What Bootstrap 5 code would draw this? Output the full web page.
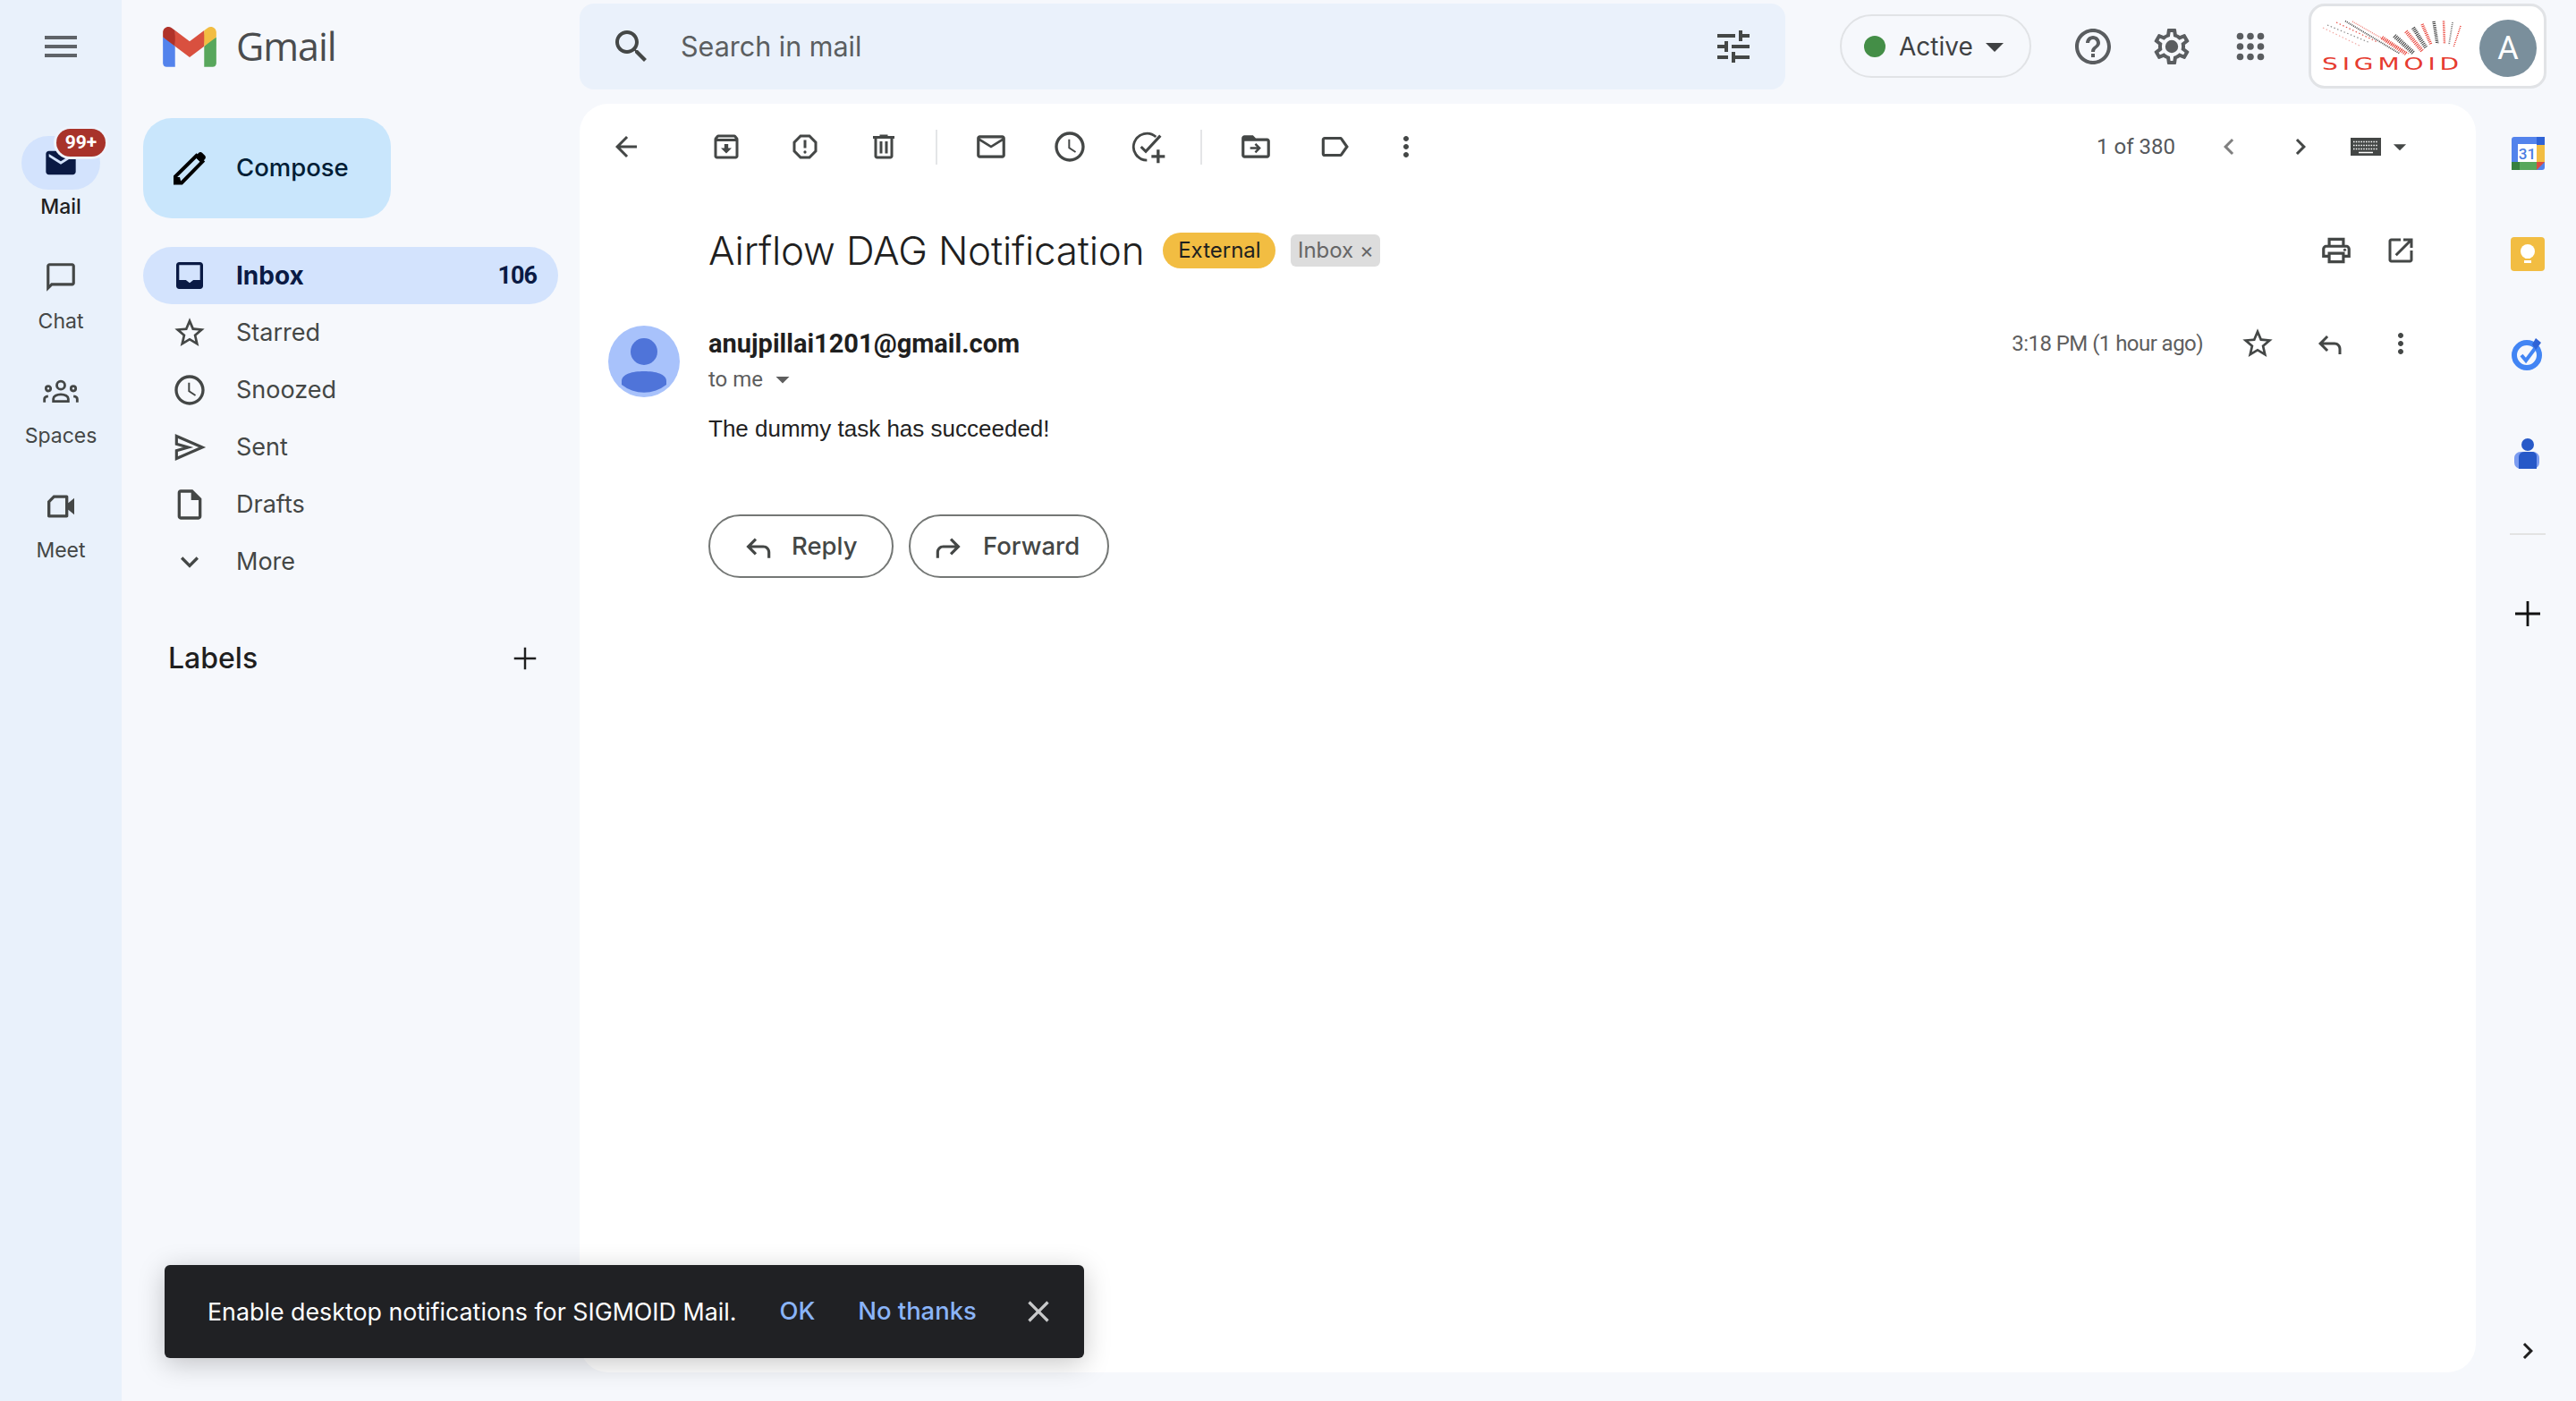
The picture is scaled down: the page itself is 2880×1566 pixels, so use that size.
<!DOCTYPE html>
<html lang="en">
<head>
    <meta charset="UTF-8">
    <title>Airflow DAG Notification - Gmail</title>
    <link href="https://cdn.jsdelivr.net/npm/bootstrap@5.3.3/dist/css/bootstrap.min.css" rel="stylesheet">
    <style>
        body {
            background-color: #f6f8fc;
            font-family: Inter, "Noto Sans", sans-serif;
            color: #444746;
            height: 1566px;
            overflow: hidden;
        }
        .ico { fill: currentColor; flex-shrink: 0; display: block; }
        .s32 { width: 32px; height: 32px; }
        .s34 { width: 34px; height: 34px; }
        .s36 { width: 36px; height: 36px; }
        .s38 { width: 38px; height: 38px; }
        .s40 { width: 40px; height: 40px; }
        .s42 { width: 42px; height: 42px; }
        .s48 { width: 48px; height: 48px; }

        /* left rail */
        .app-rail { width: 136px; background-color: #e9f1fb; flex-shrink: 0; }
        .rail-top { height: 152px; padding-top: 28px; color: #5f6368; }
        .rail-item { height: 128px; width: 136px; }
        .rail-pill { width: 88px; height: 60px; border-radius: 30px; }
        .rail-item.is-on .rail-pill { background-color: #d3e3fd; color: #0a1a44; }
        .rail-label { font-size: 23px; line-height: 38px; }
        .rail-item.is-on .rail-label { color: #1f1f1f; font-weight: 500; }
        .mail-count {
            top: -8px; left: 39px; height: 31px; width: 55px;
            background-color: #a8332a; color: #fff;
            font: 700 21px/31px Roboto, sans-serif;
            border-radius: 16px; text-align: center;
            box-shadow: 0 0 0 3px #eef3fc;
        }

        /* header */
        .top-row { height: 116px; }
        .brand { width: 512px; padding-left: 46px; gap: 22px; height: 104px; }
        .brand-name { font-size: 43px; letter-spacing: -1px; color: #4a4c4e; font-family: "Open Sans", sans-serif; }
        .search-box {
            width: 1348px; height: 96px; margin-top: 4px;
            background-color: #eaf1fb; border-radius: 16px;
            padding: 0 34px 0 34px;
        }
        .search-text { font-size: 30.5px; color: #5b5e60; margin-left: 31px; }
        .status-pill {
            width: 214px; height: 71px; margin: 16px 25px 0 61px;
            border: 2px solid #e1e3e6; border-radius: 36px;
            padding-left: 25px; font-size: 28px; color: #3f4143;
        }
        .status-dot { width: 24px; height: 24px; background-color: #448e47; border-radius: 50%; margin-right: 15px; }
        .top-btn { width: 88px; height: 104px; color: #5a5d60; }
        .org-box {
            width: 266px; height: 95px; margin: 4px 0 0 21px;
            background-color: #fff; border: 3px solid #e1e3e6; border-radius: 18px;
        }
        .org-logo { left: 12px; top: 15px; width: 160px; height: 42px; }
        .org-name {
            left: 12px; top: 50px; width: 158px; text-align: center;
            font: 400 20px/28px "DejaVu Sans", sans-serif; letter-spacing: 3.5px; color: #e63b30;
            transform: scaleX(1.4);
        }
        .org-avatar {
            right: 8px; top: 15px; width: 64px; height: 64px;
            background-color: #7a8f9c; color: #fff; border-radius: 50%;
            font: 400 36px/64px Roboto, sans-serif; text-align: center;
        }

        /* sidebar */
        .body-row { height: 1450px; padding-bottom: 32px; }
        .side-col { width: 512px; flex-shrink: 0; padding: 16px 0 0 24px; }
        .compose-btn {
            width: 277px; height: 112px; border-radius: 32px; background-color: #c9e6fc;
            padding-left: 28px; gap: 28px; font-size: 27.5px; font-weight: 500; color: #001d35;
        }
        .compose-btn .ico { color: #000; }
        .folder-list { margin-top: 32px; width: 464px; }
        .folder-row {
            height: 64px; border-radius: 32px; padding: 0 24px 0 32px; gap: 32px;
            font-size: 27px; color: #444746;
        }
        .folder-row.is-on { background-color: #d3e3fd; color: #0a1a44; font-weight: 700; font-size: 28px; }
        .folder-num { font: 700 27px Roboto, sans-serif; letter-spacing: -1px; }
        .labels-row { width: 464px; height: 64px; margin-top: 44px; padding: 0 16px 0 28px; font-size: 32px; font-weight: 500; color: #1f1f1f; }

        /* message card */
        .mail-card { width: 2120px; flex-shrink: 0; background-color: #fff; border-radius: 32px; }
        .tool-row { height: 96px; padding: 0 68px 0 8px; }
        .tool-btn { width: 88px; height: 96px; }
        .tool-last { margin-left: -8px; }
        .tool-sep { width: 2px; height: 39px; min-height: 0; align-self: center; background-color: #e4e5e7; opacity: 1; margin: 0 16px 0 14px; }
        .page-count { font: 400 24px Roboto, sans-serif; color: #55585b; margin-right: 20px; }
        .page-btn { width: 80px; height: 96px; }
        .keys-ico { margin: 0 4px 0 16px; }
        .subject-row { height: 72px; margin-top: 32px; padding: 0 48px 0 144px; }
        .subject-text { font-size: 44px; font-weight: 300; letter-spacing: -.2px; color: #1f1f1f; }
        .tag-ext {
            height: 40px; width: 126px; margin-left: 21px; border-radius: 20px;
            background-color: #f2bd42; color: #1f1f1f; font-size: 24px; text-align: center; line-height: 40px;
        }
        .tag-box {
            height: 36px; width: 100px; margin-left: 17px; border-radius: 6px;
            background-color: #dddddd; color: #666; font-size: 24px; text-align: center; line-height: 36px;
        }
        .head-btn { width: 72px; height: 72px; }
        .msg-row { margin-top: 48px; padding: 0 44px 0 32px; gap: 32px; }
        .who-avatar { width: 80px; height: 80px; flex-shrink: 0; }
        .who-name { font: 700 29px/40px Roboto, sans-serif; color: #1f1f1f; }
        .who-to { font: 400 24px/40px Roboto, sans-serif; color: #5e5e5e; }
        .msg-time { font: 400 24px/40px Roboto, sans-serif; color: #5e5e5e; letter-spacing: -.55px; margin-right: 21px; }
        .msg-btn { width: 80px; height: 40px; }
        .msg-text { font: 400 26px/40px "Liberation Sans", sans-serif; color: #222; margin-top: 15px; }
        .reply-row { margin-top: 76px; gap: 17px; }
        .reply-btn {
            height: 71px; border: 2px solid #747775; border-radius: 36px; padding: 0;
            font-size: 27.5px; font-weight: 500; color: #444746; gap: 19px;
        }
        .reply-a { width: 207px; padding-left: 34px; }
        .reply-b { width: 224px; padding-left: 24px; }

        /* right rail */
        .add-col { width: 112px; padding-left: 4px; }
        .add-cal { width: 37px; height: 37px; margin-top: 37px; }
        .add-keep { width: 38px; height: 38px; margin-top: 75px; }
        .add-task { width: 36px; height: 44px; margin-top: 71px; }
        .add-person { width: 30px; height: 34px; margin-top: 72px; }
        .add-line { width: 40px; height: 2px; background-color: #e3e3e3; margin-top: 72px; }
        .add-plus { margin-top: 64px; color: #111; }
        .add-more { margin-top: auto; margin-bottom: 6px; color: #1f1f1f; }

        /* notification bar */
        .notify-bar {
            left: 184px; top: 1414px; width: 1028px; height: 104px;
            background-color: #202124; color: #fff; border-radius: 6px;
            padding-left: 48px; font-size: 26.8px;
            box-shadow: 0 6px 30px rgba(0,0,0,.22);
        }
        .notify-act { color: #8ab4f8; font-weight: 500; font-size: 27.4px; }
        .notify-x { color: #c8c9ca; margin-left: 49px; }
    </style>
</head>
<body class="d-flex position-relative">

    <svg class="d-none">
        <symbol id="i-menu" viewBox="0 0 24 24"><path d="M3 18h18v-2H3v2zm0-5h18v-2H3v2zm0-7v2h18V6H3z"/></symbol>
        <symbol id="i-mailfill" viewBox="0 0 24 24"><path d="M20 4H4c-1.1 0-2 .9-2 2v12c0 1.1.9 2 2 2h16c1.1 0 2-.9 2-2V6c0-1.1-.9-2-2-2zm0 4l-8 5-8-5V6l8 5 8-5v2z"/></symbol>
        <symbol id="i-chat" viewBox="0 0 24 24"><path d="M20 2H4c-1.1 0-2 .9-2 2v18l4-4h14c1.1 0 2-.9 2-2V4c0-1.1-.9-2-2-2zm0 14H5.17L4 17.17V4h16v12z"/></symbol>
        <symbol id="i-spaces" viewBox="0 0 24 24"><g fill="none" stroke="currentColor" stroke-width="1.7"><circle cx="12" cy="7.6" r="2.7"/><circle cx="3.6" cy="9.8" r="1.6"/><circle cx="20.4" cy="9.8" r="1.6"/><path d="M7 18.4v-1.8c0-1.7 2.2-2.9 5-2.9s5 1.200 5 2.900v1.800z"/><path d="M1 19v-2.200c0-1 .9-1.700 2.500-1.900M23 19v-2.200c0-1-.9-1.700-2.500-1.900"/></g></symbol>
        <symbol id="i-meet" viewBox="0 0 24 24"><path d="M15 6.500v11H5V9.300L7.800 6.500H15m1-2H7L3 8.500v10c0 .55.45 1 1 1h12c.55 0 1-.45 1-1v-4.300l4 3.300V6.500l-4 3.300V5.500c0-.55-.45-1-1-1z"/></symbol>
        <symbol id="i-pencil" viewBox="0 0 24 24"><path d="M4 20.200v-3.500L15.800 5l3.400 3.300L7.500 20.200z" fill="none" stroke="currentColor" stroke-width="2"/><path d="M15 5.500l2-2c.6-.6 1.500-.6 2.100 0l1.400 1.400c.6.6.6 1.500 0 2.100l-2 2z"/><path d="M3 17h3.500l1 4H3z"/></symbol>
        <symbol id="i-inbox" viewBox="0 0 24 24"><path d="M19 3H4.990c-1.110 0-1.980.89-1.980 2L3 19c0 1.100.88 2 1.990 2H19c1.100 0 2-.9 2-2V5c0-1.110-.9-2-2-2zm0 12h-4.500L12 17l-2.500-2H4.990V5H19v10z"/></symbol>
        <symbol id="i-star" viewBox="0 0 24 24"><path d="M22 9.240l-7.190-.62L12 2 9.190 8.630 2 9.240l5.460 4.730L5.820 21 12 17.270 18.180 21l-1.630-7.030L22 9.240zM12 15.400l-3.760 2.270 1-4.280-3.320-2.880 4.380-.38L12 6.100l1.710 4.040 4.380.38-3.320 2.880 1 4.280L12 15.400z"/></symbol>
        <symbol id="i-clock" viewBox="0 0 24 24"><path d="M11.990 2C6.470 2 2 6.480 2 12s4.470 10 9.990 10C17.520 22 22 17.520 22 12S17.520 2 11.990 2zM12 20c-4.420 0-8-3.580-8-8s3.580-8 8-8 8 3.580 8 8-3.580 8-8 8zm.2-13H11v6l4.600 3.100.65-1-4.050-2.700z"/></symbol>
        <symbol id="i-send" viewBox="0 0 24 24"><path d="M3.200 4.500L20.500 12 3.200 19.500v-5.300L11 12 3.200 9.800z" fill="none" stroke="currentColor" stroke-width="1.900"/></symbol>
        <symbol id="i-draft" viewBox="0 0 24 24"><path d="M14 2H6c-1.100 0-1.990.9-1.990 2L4 20c0 1.100.89 2 1.990 2H18c1.100 0 2-.9 2-2V8l-6-6zM6 20V4h7v5h5v11H6z"/></symbol>
        <symbol id="i-down" viewBox="0 0 24 24"><path d="M16.590 8.590L12 13.170 7.410 8.590 6 10l6 6 6-6z"/></symbol>
        <symbol id="i-plus" viewBox="0 0 24 24"><path d="M19 12.700h-6.300V19h-1.400v-6.300H5v-1.400h6.300V5h1.400v6.300H19z"/></symbol>
        <symbol id="i-search" viewBox="0 0 24 24"><path d="M15.500 14h-.79l-.28-.27C15.410 12.590 16 11.110 16 9.500 16 5.910 13.090 3 9.500 3S3 5.910 3 9.500 5.910 16 9.500 16c1.610 0 3.090-.59 4.230-1.570l.27.28v.79l5 4.990L20.490 19l-4.990-5zm-6 0C7.010 14 5 11.990 5 9.500S7.010 5 9.500 5 14 7.010 14 9.500 11.990 14 9.500 14z"/></symbol>
        <symbol id="i-tune" viewBox="0 0 24 24"><path d="M3 17v2h6v-2H3zM3 5v2h10V5H3zm10 16v-2h8v-2h-8v-2h-2v6h2zM7 9v2H3v2h4v2h2V9H7zm14 4v-2H11v2h10zm-6-4h2V7h4V5h-4V3h-2v6z"/></symbol>
        <symbol id="i-caret" viewBox="0 0 24 24"><path d="M7 10l5 5 5-5z"/></symbol>
        <symbol id="i-help" viewBox="0 0 24 24"><path d="M11 18h2v-2h-2v2zm1-16C6.480 2 2 6.480 2 12s4.480 10 10 10 10-4.480 10-10S17.520 2 12 2zm0 18c-4.410 0-8-3.590-8-8s3.590-8 8-8 8 3.590 8 8-3.590 8-8 8zm0-14c-2.210 0-4 1.790-4 4h2c0-1.100.9-2 2-2s2 .9 2 2c0 2-3 1.750-3 5h2c0-2.250 3-2.500 3-5 0-2.210-1.790-4-4-4z"/></symbol>
        <symbol id="i-gear" viewBox="0 0 24 24"><path d="M19.430 12.980c.04-.32.07-.64.07-.98 0-.34-.03-.66-.07-.98l2.110-1.650c.19-.15.24-.42.12-.64l-2-3.460c-.09-.16-.26-.25-.44-.25-.06 0-.12.01-.17.03l-2.490 1c-.52-.4-1.080-.73-1.690-.98l-.38-2.650C14.460 2.180 14.250 2 14 2h-4c-.25 0-.46.18-.49.42l-.38 2.650c-.61.25-1.170.59-1.690.98l-2.490-1c-.06-.02-.12-.03-.18-.03-.17 0-.34.09-.43.25l-2 3.460c-.13.22-.07.49.12.64l2.110 1.650c-.04.32-.07.65-.07.98 0 .33.03.66.07.98l-2.110 1.650c-.19.15-.24.42-.12.64l2 3.460c.09.16.26.25.44.25.06 0 .12-.01.17-.03l2.490-1c.52.4 1.080.73 1.690.98l.38 2.650c.03.24.24.42.49.42h4c.25 0 .46-.18.49-.42l.38-2.650c.61-.25 1.170-.59 1.690-.98l2.490 1c.06.02.12.03.18.03.17 0 .34-.09.43-.25l2-3.460c.12-.22.07-.49-.12-.64l-2.110-1.650zm-1.980-1.710c.04.31.05.52.05.73 0 .21-.02.43-.05.73l-.14 1.130.89.7 1.080.84-.7 1.210-1.270-.51-1.040-.42-.9.68c-.43.32-.84.56-1.250.73l-1.060.43-.16 1.130-.2 1.350h-1.400l-.19-1.350-.16-1.130-1.060-.43c-.43-.18-.83-.41-1.230-.71l-.91-.7-1.060.43-1.270.51-.7-1.210 1.080-.84.89-.7-.14-1.130c-.03-.31-.05-.54-.05-.74s.02-.43.05-.73l.14-1.130-.89-.7-1.080-.84.7-1.210 1.270.51 1.040.42.9-.68c.43-.32.84-.56 1.250-.73l1.060-.43.16-1.130.2-1.350h1.390l.19 1.350.16 1.130 1.060.43c.43.18.83.41 1.230.71l.91.7 1.060-.43 1.270-.51.7 1.210-1.070.85-.89.7.14 1.130z"/><circle cx="12" cy="12" r="3.600"/></symbol>
        <symbol id="i-apps" viewBox="0 0 32 32"><g><circle cx="4.500" cy="4.500" r="3.800"/><circle cx="16" cy="4.500" r="3.800"/><circle cx="27.500" cy="4.500" r="3.800"/><circle cx="4.500" cy="16" r="3.800"/><circle cx="16" cy="16" r="3.800"/><circle cx="27.500" cy="16" r="3.800"/><circle cx="4.500" cy="27.500" r="3.800"/><circle cx="16" cy="27.500" r="3.800"/><circle cx="27.500" cy="27.500" r="3.800"/></g></symbol>
        <symbol id="i-back" viewBox="0 0 24 24"><path d="M20 11H7.830l5.590-5.590L12 4l-8 8 8 8 1.410-1.410L7.830 13H20v-2z"/></symbol>
        <symbol id="i-archive" viewBox="0 0 24 24"><path d="M20.540 5.230l-1.390-1.680C18.880 3.210 18.470 3 18 3H6c-.47 0-.88.21-1.160.55L3.460 5.230C3.170 5.570 3 6.020 3 6.500V19c0 1.100.9 2 2 2h14c1.100 0 2-.9 2-2V6.500c0-.48-.17-.93-.46-1.270zM6.240 5h11.520l.81.97H5.440l.8-.97zM5 19V8h14v11H5zm8.450-9h-2.900v3H8l4 4 4-4h-2.550z"/></symbol>
        <symbol id="i-report" viewBox="0 0 24 24"><path d="M15.730 3H8.270L3 8.270v7.460L8.270 21h7.460L21 15.730V8.270L15.730 3zM19 14.900L14.900 19H9.100L5 14.900V9.100L9.100 5h5.800L19 9.100v5.800z"/><path d="M11 7h2v6h-2z"/><circle cx="12" cy="16" r="1.100"/></symbol>
        <symbol id="i-trash" viewBox="0 0 24 24"><path d="M15 4V3H9v1H4v2h1v13c0 1.100.9 2 2 2h10c1.100 0 2-.9 2-2V6h1V4h-5zm2 15H7V6h10v13zM9 8h2v9H9zm4 0h2v9h-2z"/></symbol>
        <symbol id="i-mail" viewBox="0 0 24 24"><path d="M22 6c0-1.100-.9-2-2-2H4c-1.100 0-2 .9-2 2v12c0 1.100.9 2 2 2h16c1.100 0 2-.9 2-2V6zm-2 0l-8 5-8-5h16zm0 12H4V8l8 5 8-5v10z"/></symbol>
        <symbol id="i-task" viewBox="0 0 24 24"><path d="M17 5.400A9 9 0 1 0 11 21.100" fill="none" stroke="currentColor" stroke-width="1.700"/><path d="M7 12l3.200 3.200L20 4.600" fill="none" stroke="currentColor" stroke-width="1.900"/><path d="M17.500 14v3.500H14v2h3.500V23h2v-3.500H23v-2h-3.500V14z"/></symbol>
        <symbol id="i-move" viewBox="0 0 24 24"><path d="M20 6h-8l-2-2H4c-1.100 0-2 .9-2 2v12c0 1.100.9 2 2 2h16c1.100 0 2-.9 2-2V8c0-1.100-.9-2-2-2zm0 12H4V8h16v10z"/><path d="M12.200 9.500l-1.100 1.100 1.600 1.600H8v1.600h4.700l-1.600 1.600 1.100 1.100 3.500-3.500z"/></symbol>
        <symbol id="i-label" viewBox="0 0 24 24"><path d="M17.630 5.840C17.270 5.330 16.670 5 16 5L5 5.010C3.900 5.010 3 5.900 3 7v10c0 1.100.9 1.990 2 1.990L16 19c.67 0 1.270-.33 1.630-.84L22 12l-4.370-6.160zM16 17H5V7h11l3.550 5L16 17z"/></symbol>
        <symbol id="i-more" viewBox="0 0 24 24"><path d="M12 8c1.100 0 2-.9 2-2s-.9-2-2-2-2 .9-2 2 .9 2 2 2zm0 2c-1.100 0-2 .9-2 2s.9 2 2 2 2-.9 2-2-.9-2-2-2zm0 6c-1.100 0-2 .9-2 2s.9 2 2 2 2-.9 2-2-.9-2-2-2z"/></symbol>
        <symbol id="i-prev" viewBox="0 0 24 24"><path d="M15.410 7.410L14 6l-6 6 6 6 1.410-1.410L10.830 12z"/></symbol>
        <symbol id="i-next" viewBox="0 0 24 24"><path d="M10 6L8.590 7.410 13.170 12l-4.580 4.590L10 18l6-6z"/></symbol>
        <symbol id="i-keys" viewBox="0 0 34 20"><rect width="34" height="20" fill="currentColor"/><path d="M3 4.500h28M3 8.500h28M3 12.500h28" stroke="#fff" stroke-width="1.500" stroke-dasharray="1.500 1.300" fill="none"/><path d="M9 16.500h16" stroke="#fff" stroke-width="1.500" fill="none"/></symbol>
        <symbol id="i-print" viewBox="0 0 24 24"><path d="M19 8h-1V3H6v5H5c-1.660 0-3 1.340-3 3v6h4v4h12v-4h4v-6c0-1.660-1.340-3-3-3zM8 5h8v3H8V5zm8 12v2H8v-4h8v2zm2-2v-2H6v2H4v-4c0-.55.45-1 1-1h14c.55 0 1 .45 1 1v4h-2z"/><circle cx="18" cy="11.500" r="1"/></symbol>
        <symbol id="i-open" viewBox="0 0 24 24"><path d="M19 19H5V5h7V3H5c-1.110 0-2 .9-2 2v14c0 1.100.89 2 2 2h14c1.100 0 2-.9 2-2v-7h-2v7zM14 3v2h3.590l-9.830 9.830 1.410 1.410L19 6.410V10h2V3h-7z"/></symbol>
        <symbol id="i-reply" viewBox="0 0 24 24"><path d="M21 20h-2v-4c0-1.660-1.340-3-3-3H7.830l3.590 3.590L10 18l-6-6 6-6 1.410 1.410L7.830 11H16c2.760 0 5 2.240 5 5v4z"/></symbol>
        <symbol id="i-forward" viewBox="0 0 24 24"><path d="M3 20h2v-4c0-1.660 1.340-3 3-3h8.170l-3.590 3.590L14 18l6-6-6-6-1.410 1.410L16.170 11H8c-2.760 0-5 2.240-5 5v4z"/></symbol>
        <symbol id="i-close" viewBox="0 0 24 24"><path d="M19 6.410L17.590 5 12 10.590 6.410 5 5 6.410 10.590 12 5 17.590 6.410 19 12 13.410 17.590 19 19 17.590 13.410 12z"/></symbol>
    </svg>

    <!-- left app rail -->
    <div class="app-rail d-flex flex-column align-items-center">
        <div class="rail-top"><svg class="ico s48"><use href="#i-menu"/></svg></div>
        <div class="rail-item is-on d-flex flex-column align-items-center">
            <div class="rail-pill position-relative d-flex align-items-center justify-content-center">
                <svg class="ico s40"><use href="#i-mailfill"/></svg>
                <span class="mail-count position-absolute">99+</span>
            </div>
            <div class="rail-label">Mail</div>
        </div>
        <div class="rail-item d-flex flex-column align-items-center">
            <div class="rail-pill d-flex align-items-center justify-content-center"><svg class="ico s38"><use href="#i-chat"/></svg></div>
            <div class="rail-label">Chat</div>
        </div>
        <div class="rail-item d-flex flex-column align-items-center">
            <div class="rail-pill d-flex align-items-center justify-content-center"><svg class="ico s40"><use href="#i-spaces"/></svg></div>
            <div class="rail-label">Spaces</div>
        </div>
        <div class="rail-item d-flex flex-column align-items-center">
            <div class="rail-pill d-flex align-items-center justify-content-center"><svg class="ico s40"><use href="#i-meet"/></svg></div>
            <div class="rail-label">Meet</div>
        </div>
    </div>

    <div class="flex-grow-1 d-flex flex-column">
        <!-- header -->
        <div class="top-row d-flex">
            <div class="brand d-flex align-items-center">
                <svg width="60" height="45" viewBox="0 0 256 193">
                    <path fill="#5383ec" d="M58.182 192.050V93.140L27.507 65.077 0 49.504v125.091c0 9.658 7.825 17.455 17.455 17.455h40.727Z"/>
                    <path fill="#58a75c" d="M197.818 192.050h40.727c9.659 0 17.455-7.826 17.455-17.455V49.505l-31.156 17.837-27.026 25.798v98.910Z"/>
                    <path fill="#d9503f" d="M58.182 93.140l-4.174-38.647 4.174-36.989L128 69.868l69.818-52.364 4.669 34.992-4.669 40.644L128 145.504z"/>
                    <path fill="#f2bd42" d="M197.818 17.504V93.140L256 49.504V26.231c0-21.585-24.640-33.890-41.890-20.945l-16.292 12.218Z"/>
                    <path fill="#b03229" d="M0 49.504l26.759 20.070L58.182 93.140V17.504L41.890 5.286C24.610-7.660 0 4.646 0 26.230v23.273Z"/>
                </svg>
                <span class="brand-name">Gmail</span>
            </div>
            <div class="search-box d-flex align-items-center">
                <svg class="ico s48"><use href="#i-search"/></svg>
                <span class="search-text flex-grow-1">Search in mail</span>
                <svg class="ico s48"><use href="#i-tune"/></svg>
            </div>
            <div class="status-pill d-flex align-items-center">
                <span class="status-dot"></span>
                <span>Active</span>
                <svg class="ico s48"><use href="#i-caret"/></svg>
            </div>
            <div class="top-btn d-flex align-items-center justify-content-center"><svg class="ico s48"><use href="#i-help"/></svg></div>
            <div class="top-btn d-flex align-items-center justify-content-center"><svg class="ico s48"><use href="#i-gear"/></svg></div>
            <div class="top-btn d-flex align-items-center justify-content-center"><svg class="ico s32"><use href="#i-apps"/></svg></div>
            <div class="org-box position-relative">
                <svg class="org-logo position-absolute" viewBox="0 0 160 42" fill="none">
                    <g stroke-dasharray="1.500 2.500" stroke-width="1.200">
                        <path stroke="#f2a8a2" d="M1 9L44 30"/>
                        <path stroke="#8d8d8d" d="M6 6L54 26"/>
                        <path stroke="#e8564c" d="M16 3L62 25"/>
                    </g>
                    <g stroke-dasharray="1 1.100">
                        <path stroke="#444" stroke-width="1.800" d="M26 1.500L87 38"/>
                        <path stroke="#f08a83" stroke-width="1.500" d="M34 2L97 38"/>
                        <path stroke="#e8392f" stroke-width="4.500" d="M67 20L94 38"/>
                        <path stroke="#333" stroke-width="5" d="M81 18L102 37"/>
                        <path stroke="#e8392f" stroke-width="4.500" d="M94 13L112 35"/>
                        <path stroke="#333" stroke-width="4.500" d="M102 9L116 31"/>
                        <path stroke="#e8392f" stroke-width="3.500" d="M112 5L122 28"/>
                        <path stroke="#333" stroke-width="3.500" d="M125 2L129 27"/>
                        <path stroke="#e8392f" stroke-width="2.500" d="M136 1.500L137 27"/>
                        <path stroke="#777" stroke-width="1.800" d="M146 3L142 28"/>
                        <path stroke="#e8392f" stroke-width="1.500" d="M155 7L147 31"/>
                    </g>
                </svg>
                <span class="org-name position-absolute">SIGMOID</span>
                <span class="org-avatar position-absolute">A</span>
            </div>
        </div>

        <div class="body-row d-flex">
            <!-- sidebar -->
            <div class="side-col">
                <div class="compose-btn d-flex align-items-center">
                    <svg class="ico s48"><use href="#i-pencil"/></svg>
                    <span>Compose</span>
                </div>
                <div class="folder-list">
                    <div class="folder-row is-on d-flex align-items-center">
                        <svg class="ico s40"><use href="#i-inbox"/></svg>
                        <span class="flex-grow-1">Inbox</span>
                        <span class="folder-num">106</span>
                    </div>
                    <div class="folder-row d-flex align-items-center"><svg class="ico s40"><use href="#i-star"/></svg><span>Starred</span></div>
                    <div class="folder-row d-flex align-items-center"><svg class="ico s40"><use href="#i-clock"/></svg><span>Snoozed</span></div>
                    <div class="folder-row d-flex align-items-center"><svg class="ico s40"><use href="#i-send"/></svg><span>Sent</span></div>
                    <div class="folder-row d-flex align-items-center"><svg class="ico s40"><use href="#i-draft"/></svg><span>Drafts</span></div>
                    <div class="folder-row d-flex align-items-center"><svg class="ico s40"><use href="#i-down"/></svg><span>More</span></div>
                </div>
                <div class="labels-row d-flex align-items-center justify-content-between">
                    <span>Labels</span>
                    <svg class="ico s42"><use href="#i-plus"/></svg>
                </div>
            </div>

            <!-- message -->
            <div class="mail-card">
                <div class="tool-row d-flex align-items-center">
                    <div class="tool-btn d-flex align-items-center justify-content-center me-4"><svg class="ico s36"><use href="#i-back"/></svg></div>
                    <div class="tool-btn d-flex align-items-center justify-content-center"><svg class="ico s36"><use href="#i-archive"/></svg></div>
                    <div class="tool-btn d-flex align-items-center justify-content-center"><svg class="ico s36"><use href="#i-report"/></svg></div>
                    <div class="tool-btn d-flex align-items-center justify-content-center"><svg class="ico s36"><use href="#i-trash"/></svg></div>
                    <div class="vr tool-sep"></div>
                    <div class="tool-btn d-flex align-items-center justify-content-center"><svg class="ico s38"><use href="#i-mail"/></svg></div>
                    <div class="tool-btn d-flex align-items-center justify-content-center"><svg class="ico s40"><use href="#i-clock"/></svg></div>
                    <div class="tool-btn d-flex align-items-center justify-content-center"><svg class="ico s40"><use href="#i-task"/></svg></div>
                    <div class="vr tool-sep"></div>
                    <div class="tool-btn d-flex align-items-center justify-content-center"><svg class="ico s38"><use href="#i-move"/></svg></div>
                    <div class="tool-btn d-flex align-items-center justify-content-center"><svg class="ico s38"><use href="#i-label"/></svg></div>
                    <div class="tool-btn tool-last d-flex align-items-center justify-content-center"><svg class="ico s36"><use href="#i-more"/></svg></div>
                    <span class="page-count ms-auto">1 of 380</span>
                    <div class="page-btn d-flex align-items-center justify-content-center text-black-50"><svg class="ico s36"><use href="#i-prev"/></svg></div>
                    <div class="page-btn d-flex align-items-center justify-content-center"><svg class="ico s36"><use href="#i-next"/></svg></div>
                    <svg class="ico keys-ico" width="34" height="20"><use href="#i-keys"/></svg>
                    <svg class="ico s34"><use href="#i-caret"/></svg>
                </div>

                <div class="subject-row d-flex align-items-center">
                    <span class="subject-text">Airflow DAG Notification</span>
                    <span class="tag-ext">External</span>
                    <span class="tag-box">Inbox ×</span>
                    <div class="head-btn d-flex align-items-center justify-content-center ms-auto"><svg class="ico s38"><use href="#i-print"/></svg></div>
                    <div class="head-btn d-flex align-items-center justify-content-center"><svg class="ico s36"><use href="#i-open"/></svg></div>
                </div>

                <div class="msg-row d-flex align-items-start">
                    <svg class="who-avatar" viewBox="0 0 80 80">
                        <circle cx="40" cy="40" r="40" fill="#a8c2fb"/>
                        <ellipse cx="40" cy="29" rx="15" ry="15" fill="#4f74d9"/>
                        <path fill="#4f74d9" d="M15 62c0-8 12-11 25-11s25 3 25 11v4a40 40 0 0 1-50 0z"/>
                    </svg>
                    <div class="flex-grow-1">
                        <div class="d-flex align-items-center">
                            <span class="who-name flex-grow-1">anujpillai1201@gmail.com</span>
                            <span class="msg-time">3:18 PM (1 hour ago)</span>
                            <div class="msg-btn d-flex align-items-center justify-content-center"><svg class="ico s40"><use href="#i-star"/></svg></div>
                            <div class="msg-btn d-flex align-items-center justify-content-center"><svg class="ico s36"><use href="#i-reply"/></svg></div>
                            <div class="msg-btn d-flex align-items-center justify-content-center"><svg class="ico s36"><use href="#i-more"/></svg></div>
                        </div>
                        <div class="who-to d-flex align-items-center">to me<svg class="ico s36 ms-1"><use href="#i-caret"/></svg></div>
                        <div class="msg-text">The dummy task has succeeded!</div>
                        <div class="reply-row d-flex">
                            <button type="button" class="btn reply-btn reply-a d-flex align-items-center"><svg class="ico s38"><use href="#i-reply"/></svg>Reply</button>
                            <button type="button" class="btn reply-btn reply-b d-flex align-items-center"><svg class="ico s38"><use href="#i-forward"/></svg>Forward</button>
                        </div>
                    </div>
                </div>
            </div>

            <!-- right add-on rail -->
            <div class="add-col d-flex flex-column align-items-center">
                <svg class="add-cal" viewBox="0 0 37 37">
                    <rect width="37" height="37" rx="3" fill="#5383ec"/>
                    <rect x="28" width="9" height="9" fill="#2f63d6"/>
                    <rect x="28" y="9" width="9" height="19" fill="#f2bd42"/>
                    <rect y="28" width="28" height="9" fill="#58a75c"/>
                    <rect y="28" width="9" height="9" fill="#37803f"/>
                    <path d="M28 28h9l-9 9z" fill="#dc4c3e"/>
                    <rect x="7" y="8" width="21" height="20" fill="#fff"/>
                    <text x="17.500" y="25" text-anchor="middle" font-family="Roboto, sans-serif" font-weight="500" font-size="17" fill="#4a7de2">31</text>
                </svg>
                <svg class="add-keep" viewBox="0 0 38 38">
                    <rect width="38" height="38" rx="4" fill="#f2bd42"/>
                    <circle cx="19" cy="16" r="8" fill="#fff"/>
                    <path d="M15 19h8l-1.500 5h-5z" fill="#fff"/>
                    <rect x="15" y="26" width="8" height="3" fill="#fff"/>
                </svg>
                <svg class="add-task" viewBox="0 0 36 44">
                    <circle cx="17" cy="23" r="14" fill="none" stroke="#4285f4" stroke-width="6"/>
                    <path d="M11 23l5 6 12-16" fill="none" stroke="#4285f4" stroke-width="4"/>
                    <path d="M27 4l6 5-6 8-4-6z" fill="#2f63d6"/>
                </svg>
                <svg class="add-person" viewBox="0 0 30 34">
                    <rect y="15" width="28" height="19" rx="7" fill="#7b9cf0"/>
                    <circle cx="15" cy="7" r="7" fill="#2759c8"/>
                    <path d="M11 15h9a5 5 0 0 1 5 5v14H5V21a6 6 0 0 1 6-6z" fill="#2759c8"/>
                </svg>
                <div class="add-line"></div>
                <svg class="ico s48 add-plus"><use href="#i-plus"/></svg>
                <svg class="ico s36 add-more"><use href="#i-next"/></svg>
            </div>
        </div>
    </div>

    <!-- notification bar sits over the page -->
    <div class="notify-bar position-absolute d-flex align-items-center">
        <span>Enable desktop notifications for SIGMOID Mail.</span>
        <span class="notify-act ms-5">OK</span>
        <span class="notify-act ms-5">No thanks</span>
        <svg class="ico s40 notify-x"><use href="#i-close"/></svg>
    </div>

    <script src="https://cdn.jsdelivr.net/npm/bootstrap@5.3.3/dist/js/bootstrap.bundle.min.js"></script>
</body>
</html>
